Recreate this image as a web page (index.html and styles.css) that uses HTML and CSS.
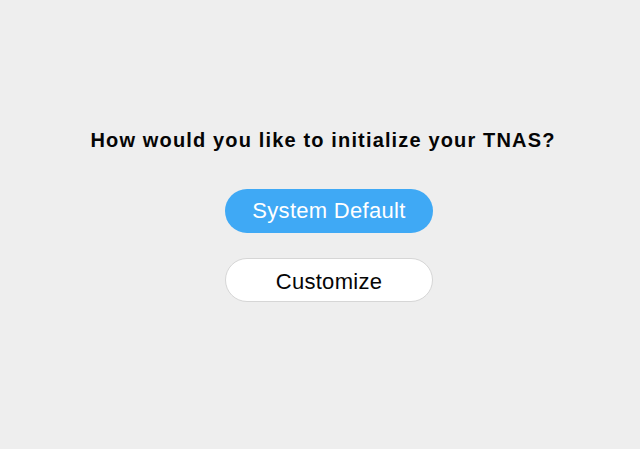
FILE: index.html
```html
<!DOCTYPE html>
<html>
<head>
<meta charset="utf-8">
<link rel="stylesheet" href="styles.css">
</head>
<body>
<main class="init">
  <h1 class="init-title">How would you like to initialize your TNAS?</h1>
  <div class="init-actions">
    <button class="btn btn-primary">System Default</button>
    <button class="btn btn-secondary">Customize</button>
  </div>
</main>
</body>
</html>
```

FILE: styles.css
```css
html, body {
  margin: 0;
  padding: 0;
  background: #eeeeee;
}
body {
  width: 640px;
  height: 449px;
  font-family: "Liberation Sans", Arial, sans-serif;
}
.init {
  display: flex;
  flex-direction: column;
  align-items: center;
  padding-top: 127px;
}
.init-title {
  margin: 0 0 0 6px;
  font-size: 20px;
  font-weight: bold;
  color: #050505;
  line-height: 26px;
  letter-spacing: 1.15px;
}
.init-actions {
  display: flex;
  flex-direction: column;
  align-items: center;
  gap: 25px;
  margin-top: 36px;
  margin-left: 18px;
}
.btn {
  width: 208px;
  height: 44px;
  border-radius: 22px;
  font-family: "Liberation Sans", Arial, sans-serif;
  font-size: 22px;
  letter-spacing: 0.3px;
  padding: 0;
  box-sizing: border-box;
}
.btn-primary {
  background: #3fa9f5;
  color: #fff;
  border: none;
}
.btn-secondary {
  background: #fff;
  color: #050505;
  border: 1px solid #d6d6d6;
  padding-top: 3px;
}
```
